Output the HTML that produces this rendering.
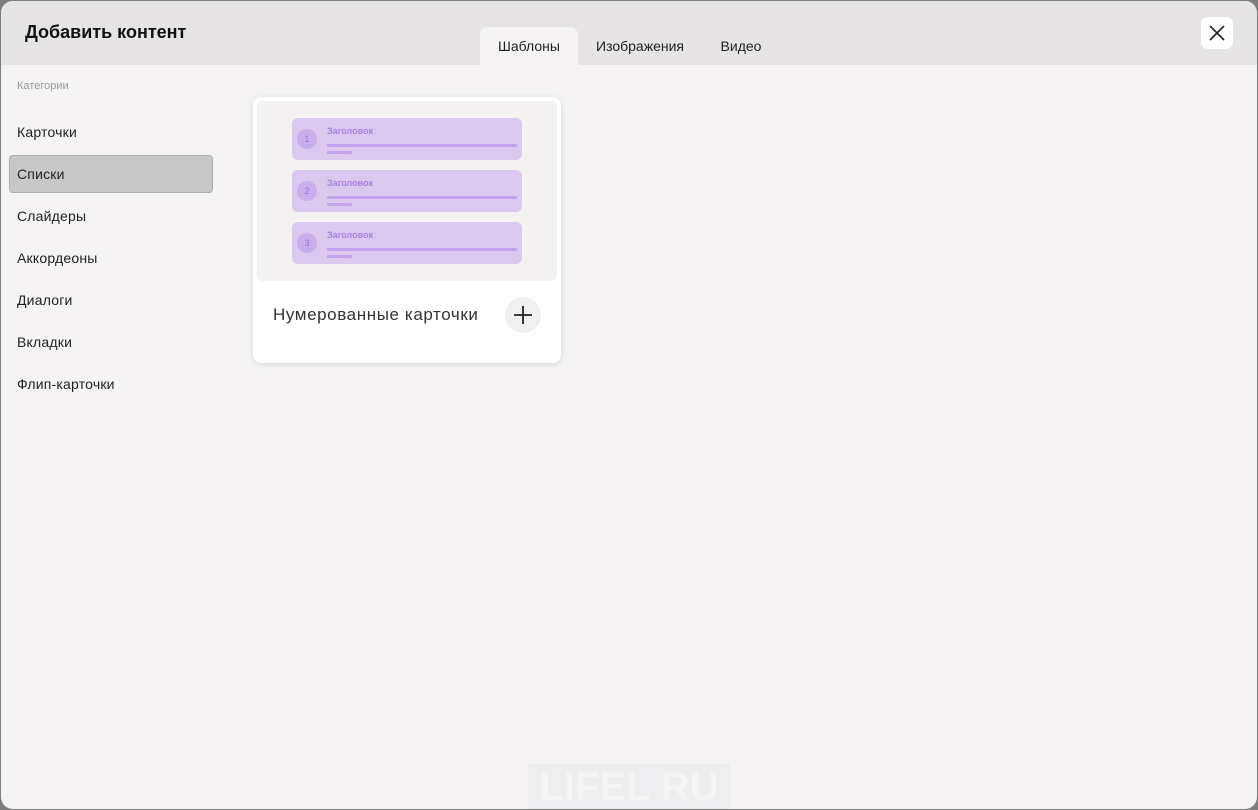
<!DOCTYPE html>
<html><head><meta charset="utf-8"><style>
*{box-sizing:border-box;margin:0;padding:0}
html,body{width:1258px;height:810px;background:#7d7d7d;overflow:hidden;font-family:"Liberation Sans","Noto Sans CJK SC",sans-serif}
.win{position:absolute;left:1px;top:1px;width:1256px;height:808px;background:#f5f4f2;border-radius:12px;overflow:hidden}
.hdr{position:absolute;left:0;top:0;width:100%;height:64px;background:#e6e5e1}
.title{position:absolute;left:24px;top:21px;font-size:18px;font-weight:bold;color:#111}
.tab{position:absolute;top:26px;height:38px;font-size:14px;color:#222;line-height:38px;text-align:center}
.tab.act{background:#f5f4f2;border-radius:8px 8px 0 0}
.close{position:absolute;left:1200px;top:16px;width:32px;height:32px;background:#fff;border-radius:7px}
.cat{position:absolute;left:16px;top:79px;font-size:11px;color:#999}
.item{position:absolute;left:16px;font-size:14px;color:#222;letter-spacing:.2px}
.sel{position:absolute;left:8px;top:154px;width:204px;height:38px;background:#c8c8c8;border:1px solid #aaa;border-radius:4px}
.card{position:absolute;left:252px;top:96px;width:308px;height:266px;background:#fff;border-radius:8px;box-shadow:0 1px 6px rgba(0,0,0,.12)}
.prev{position:absolute;left:4px;top:4px;width:300px;height:180px;background:#f3f2f0;border-radius:6px}
.li{position:absolute;left:35px;width:230px;height:42px;background:#dac8ee;border-radius:6px}
.num{position:absolute;left:5px;top:11px;width:20px;height:20px;border-radius:50%;background:#c9aeec;color:#9a72d8;font-size:9px;text-align:center;line-height:20px}
.lt{position:absolute;left:35px;top:8px;font-size:9px;font-weight:bold;color:#a880e0}
.l1{position:absolute;left:35px;top:26px;width:190px;height:3px;background:#c2a2ea;border-radius:1px}
.l2{position:absolute;left:35px;top:33px;width:25px;height:3px;background:#c2a2ea;border-radius:1px}
.name{position:absolute;left:20px;top:208px;font-size:17px;color:#333;letter-spacing:.6px}
.plus{position:absolute;left:252px;top:200px;width:36px;height:36px;border-radius:50%;background:#f1f0ee}
</style></head><body>
<div class="win">
<div class="hdr">
<div class="title">Добавить контент</div>
<div class="tab act" style="left:479px;width:98px">Шаблоны</div>
<div class="tab" style="left:589px;width:100px">Изображения</div>
<div class="tab" style="left:710px;width:60px">Видео</div>
<div class="close"><svg width="32" height="32"><path d="M9 9L23 23M23 9L9 23" stroke="#222" stroke-width="1.6"/></svg></div>
</div>
<div class="cat">Категории</div>
<div class="sel"></div>
<div class="item" style="top:123px">Карточки</div>
<div class="item" style="top:165px">Списки</div>
<div class="item" style="top:207px">Слайдеры</div>
<div class="item" style="top:249px">Аккордеоны</div>
<div class="item" style="top:291px">Диалоги</div>
<div class="item" style="top:333px">Вкладки</div>
<div class="item" style="top:375px">Флип-карточки</div>
<div class="card">
<div class="prev">
<div class="li" style="top:17px"><div class="num">1</div><div class="lt">Заголовок</div><div class="l1"></div><div class="l2"></div></div>
<div class="li" style="top:69px"><div class="num">2</div><div class="lt">Заголовок</div><div class="l1"></div><div class="l2"></div></div>
<div class="li" style="top:121px"><div class="num">3</div><div class="lt">Заголовок</div><div class="l1"></div><div class="l2"></div></div>
</div>
<div class="name">Нумерованные карточки</div>
<div class="plus"><svg width="36" height="36"><path d="M18 9V27M9 18H27" stroke="#222" stroke-width="1.8"/></svg></div>
</div>
<div style="position:absolute;left:527px;top:763px;width:202px;height:46px;background:#eceeef;color:#f5f5f5;font-size:40px;font-weight:bold;text-align:center;line-height:46px">LIFEL RU</div>
</div>
</body></html>
